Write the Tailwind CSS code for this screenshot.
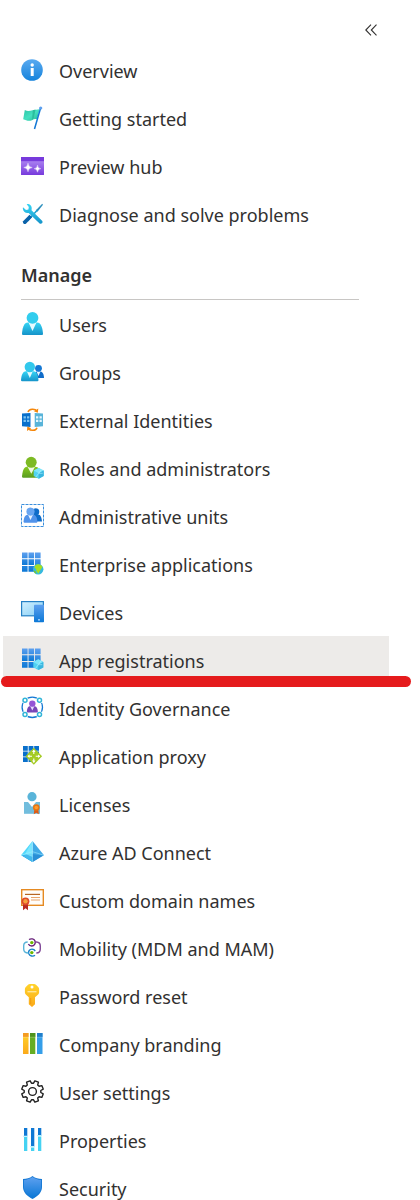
<!DOCTYPE html>
<html lang="en">
<head>
<meta charset="utf-8">
<meta name="viewport" content="width=device-width, initial-scale=1">
<title>Azure Active Directory menu</title>
<script src="https://cdn.jsdelivr.net/npm/@tailwindcss/browser@4"></script>
</head>
<body class="h-screen overflow-hidden bg-white font-['Noto_Sans','Open_Sans',sans-serif] text-lg text-[#323130]">
<svg class="absolute size-0" aria-hidden="true">
  <defs>
    <linearGradient id="info" x2="0" y2="1"><stop stop-color="#5aaaf0"/><stop offset="1" stop-color="#1583dc"/></linearGradient>
    <linearGradient id="blue" x2="0" y2="1"><stop stop-color="#5ea0ef"/><stop offset="1" stop-color="#0b78d6"/></linearGradient>
    <linearGradient id="cyan" x2="0" y2="1"><stop stop-color="#36d5f5"/><stop offset="1" stop-color="#1593c9"/></linearGradient>
    <linearGradient id="purple" x2="0" y2="1"><stop stop-color="#b794f6"/><stop offset="1" stop-color="#773adc"/></linearGradient>
    <linearGradient id="green" x2="0" y2="1"><stop stop-color="#86c81f"/><stop offset="1" stop-color="#599c20"/></linearGradient>
    <linearGradient id="gold" x2="0" y2="1"><stop stop-color="#ffd32b"/><stop offset="1" stop-color="#fba91a"/></linearGradient>
    <linearGradient id="teal" x2="1" y2="1"><stop stop-color="#2bc4a5"/><stop offset=".5" stop-color="#45e0c0"/><stop offset="1" stop-color="#25b896"/></linearGradient>
    <linearGradient id="screen" x2="1" y2="1"><stop stop-color="#d2f0ff"/><stop offset="1" stop-color="#83cdf5"/></linearGradient>
    <g id="cube"><path d="M0-5.4 5-2.700v5.400L0 5.400-5 2.700v-5.400z" fill="#50d3f2"/><path d="M0-5.400 5-2.700 0 0-5-2.700z" fill="#7de6fa"/><path d="M0 0 5-2.700v5.400L0 5.400z" fill="#39b5df"/><path d="M0 0-3 4M0 0 3-4M0 0h4" stroke="#b5f3ff" stroke-width=".6"/></g>
    <g id="tiles"><path d="M1 .5h5.600v5.800H1zM1 7.200h5.600V13H1z"/><path d="M7.500.5h5.600v5.800H7.500zM7.500 7.200h5.600V13H7.500z"/><path d="M14 .5h5.600v5.800H14zM14 7.200h5.600V13H14zM1 14h5.600v5.800H1zM7.500 14h5.600v5.800H7.500zM14 14h5.600v5.800H14z"/></g>
  </defs>
</svg>

<nav aria-label="Azure Active Directory" class="pl-[3px]">
  <div class="flex h-[46px] items-start justify-end pt-5 pr-[39px]">
    <button type="button" aria-label="Collapse menu" class="flex h-5 w-5 items-center justify-center">
      <svg class="h-3 w-3" viewBox="0 0 12 12" fill="none" stroke="#323130" stroke-width="1.1"><path d="M6 .7.8 6 6 11.300M11.500.7 6.300 6l5.200 5.300"/></svg>
    </button>
  </div>

  <ul class="mr-[31px] [&_a]:pt-0.5 [&_svg]:mb-0.5">
    <li><a href="#overview" class="flex h-12 items-center gap-[14px] pl-[18px]">
      <svg class="size-6 shrink-0" viewBox="0 0 24 24"><circle cx="11" cy="12" r="10.800" fill="url(#info)"/><circle cx="11.200" cy="7" r="1.700" fill="#fff"/><path d="M9.700 10h3v8h-3z" fill="#fff"/></svg>
      Overview</a></li>
    <li><a href="#start" class="flex h-12 items-center gap-[14px] pl-[18px]">
      <svg class="size-6 shrink-0" viewBox="0 0 24 24"><path d="M3.800 4c3 1.800 5.200.8 8 .2l6.700-.9-2.300 10c-2-.7-3.300-.3-5.200.9-3 1.200-6 .3-8.800-1z" fill="url(#teal)"/><path d="m11.800 4.200 2.700-.7-1.700 8.600-1.800 2z" fill="#2bbd9d"/><path d="m19.600 2-6.100 21" stroke="#1478d4" stroke-width="1.500"/><circle cx="19.700" cy="2" r="1.600" fill="#5ea0ef"/></svg>
      Getting started</a></li>
    <li><a href="#preview" class="flex h-12 items-center gap-[14px] pl-[18px]">
      <svg class="size-6 shrink-0" viewBox="0 0 24 24"><rect y="3" width="23" height="18" rx=".6" fill="url(#purple)"/><path d="M0 3h23v4.200H0z" fill="#773adc"/><path d="M7 9.200q.4 4 4.200 4.300-3.800.3-4.200 4.300-.4-4-4.200-4.300Q6.600 13.200 7 9.200zM16.500 11.200q.3 3.100 3.300 3.500-3 .4-3.300 3.500-.3-3.100-3.300-3.500 3-.4 3.300-3.500z" fill="#fff" stroke="#fff" stroke-width=".4"/></svg>
      Preview hub</a></li>
    <li><a href="#diagnose" class="flex h-12 items-center gap-[14px] pl-[18px]">
      <svg class="size-6 shrink-0" viewBox="0 0 24 24"><path d="m21.200 1.800.8.9-5.500 7-1.600-1.400z" fill="#2c8fbd"/><path d="m16.400 8-10 11" stroke="#1aa0cf" stroke-width="1.600"/><path d="m8.500 12.800 2.600 2.500-6.200 6.500c-1.500 1-3.600-.8-2.800-2.600z" fill="#0a62a9"/><path d="M5.700 2.200c2.500-.6 5.300 1.300 5 4.500l-.2 1.500L21.300 19c1 1.600-1 3.600-2.700 2.600L7.700 10.900C4.800 11.500 1.900 9.800 1.800 6.300l.2-1 3 2.800 2.400-.6.400-2.400z" fill="url(#cyan)"/></svg>
      Diagnose and solve problems</a></li>
  </ul>

  <h2 class="mr-[61px] ml-[18px] flex h-[62px] items-center border-b border-[#c8c6c4] pt-3 font-semibold">Manage</h2>

  <ul class="mr-[31px] [&_a]:pt-0.5 [&_svg]:mb-0.5">
    <li><a href="#users" class="flex h-12 items-center gap-[14px] pl-[18px]">
      <svg class="size-6 shrink-0" viewBox="0 0 24 24"><path d="M1 22c.3-5 1.400-11.500 6-11.500h9c4.500 0 5.700 6.500 6 11.500q0 1-1 1H2q-1 0-1-1z" fill="url(#cyan)"/><path d="M7.500 10.500h8L11.500 19z" fill="#e6fbff"/><circle cx="11.500" cy="5.900" r="5.900" fill="#32cdee"/></svg>
      Users</a></li>
    <li><a href="#groups" class="flex h-12 items-center gap-[14px] pl-[18px]">
      <svg class="size-6 shrink-0" viewBox="0 0 24 24"><path d="M13 18c0-4 1-6.500 3-6.500h3.500c2.500 0 3.500 4 3.500 6.500z" fill="#0f6cc9"/><path d="m15.500 11.500 2 4.500 2-4.500z" fill="#e6f6ff"/><circle cx="17.500" cy="8.300" r="3.400" fill="#1478d4"/><path d="M0 20.500C.2 16 1.500 11.300 5 11.300h7.500c3.500 0 4.700 4.700 5 9.200l-.8.800H.8z" fill="url(#cyan)"/><path d="M5.800 11.300h6L8.800 18z" fill="#e6fbff"/><circle cx="8.800" cy="7" r="5.200" fill="#32c8ec"/></svg>
      Groups</a></li>
    <li><a href="#external" class="flex h-12 items-center gap-[14px] pl-[18px]">
      <svg class="size-6 shrink-0" viewBox="0 0 24 24"><path d="M1 5.500 9.500 5v14L1 18.300z" fill="#0a70cb"/><path d="M13.700 5 22 5.500v12.800l-8.300.7z" fill="#59b4d9"/><path d="M2.500 8.300h2.400v2.200H2.500zm3.500 0h2.300v2.200H6zm-3.500 3.500h2.400V14H2.500zm3.500 0h2.300V14H6z" fill="#7dc4f2"/><path d="M15 8.300h2.300v2.200H15zm3.500 0h2.300v2.200h-2.300zM15 11.800h2.300V14H15zm3.500 0h2.300V14h-2.300z" fill="#e5f7ff"/><path d="M7 4c1-3.500 7.200-3.700 9-.7M16 19.700c-1 3.300-6.500 3.500-8.500.8" fill="none" stroke="#f5870b" stroke-width="1.500"/><path d="m17.300.5-.5 4.200-3.900-1.400zM6 23l.3-4.500 3.900 1.700z" fill="#f5870b"/></svg>
      External Identities</a></li>
    <li><a href="#roles" class="flex h-12 items-center gap-[14px] pl-[18px]">
      <svg class="size-6 shrink-0" viewBox="0 0 24 24"><path d="M1 21c.3-4.500 1.300-10.200 5-10.200h8.500c3 0 4.500 3 4.700 8.500l-2.200 2.500H1.800z" fill="url(#green)"/><path d="M6.500 10.800h7.500l-3.700 7z" fill="#f0f8e5"/><circle cx="10.200" cy="6.300" r="5.500" fill="#7dba23"/><use href="#cube" x="17.700" y="17.300"/></svg>
      Roles and administrators</a></li>
    <li><a href="#units" class="flex h-12 items-center gap-[14px] pl-[18px]">
      <svg class="size-6 shrink-0" viewBox="0 0 24 24"><rect x=".5" y=".5" width="22" height="22" fill="none" stroke="#3a8fdd" stroke-dasharray="3 1"/><path d="M10 17.500c1-5 2-7 4-7h3c2.700 0 3.700 3.500 4 7z" fill="#0f6cc9"/><circle cx="14.800" cy="7.800" r="3.500" fill="#0f6cc9"/><path d="M2.500 18c.2-3.500 1.200-7.300 4-7.300h6c2.700 0 3.700 3.800 4 7.300l-.8.800H3.300z" fill="#5193eb"/><path d="M7 10.700h5L9.500 16z" fill="#e8f3ff"/><circle cx="9.500" cy="7.600" r="4.100" fill="#67a5f1"/></svg>
      Administrative units</a></li>
    <li><a href="#enterprise" class="flex h-12 items-center gap-[14px] pl-[18px]">
      <svg class="size-6 shrink-0" viewBox="0 0 24 24"><use href="#tiles" fill="url(#blue)"/><circle cx="17.200" cy="17.200" r="5.200" fill="#36b9df"/><path d="M14.500 13c3-1.500 5.800-.2 7 2l-2.200 3.200-2 3.500-1.800-2.500-.7-2.500-1.500-1z" fill="#a4df24"/><path d="m12.500 18 2.300 1.500.5 2.500c-1.500-.6-2.700-2.300-2.800-4z" fill="#7ac82c"/></svg>
      Enterprise applications</a></li>
    <li><a href="#devices" class="flex h-12 items-center gap-[14px] pl-[18px]">
      <svg class="size-6 shrink-0" viewBox="0 0 24 24"><rect x=".6" y="1.600" width="21.800" height="14.200" fill="url(#screen)" stroke="#2580c5" stroke-width="1.200"/><rect x="13" y="4.700" width="10" height="17.500" rx=".8" fill="url(#blue)"/><path d="M17 19.300h2v1.200h-2z" fill="#b9dcff"/></svg>
      Devices</a></li>
    <li class="relative"><a href="#apps" aria-current="page" class="flex h-12 items-center gap-[14px] bg-[#edebe9] pl-[18px]">
      <svg class="size-6 shrink-0" viewBox="0 0 24 24"><use href="#tiles" fill="url(#blue)"/><use href="#cube" x="17.300" y="16.700"/></svg>
      App registrations</a>
      <span class="absolute top-10 -right-[22px] -left-[2px] h-[11px] rounded-full bg-[#e51b1c]"></span></li>
    <li><a href="#governance" class="flex h-12 items-center gap-[14px] pl-[18px]">
      <svg class="size-6 shrink-0" viewBox="0 0 24 24"><circle cx="11.300" cy="11.300" r="10.200" fill="none" stroke="#1478d4" stroke-width="1.300"/><g fill="#fff" stroke="#fff" stroke-width="2.600"><circle cx="4" cy="4.300" r="2"/><circle cx="18.500" cy="4.300" r="2"/><circle cx="4" cy="18.500" r="2"/><circle cx="18.500" cy="18.500" r="2"/></g><g fill="#fff" stroke="#32b5d8" stroke-width="1.500"><circle cx="4" cy="4.300" r="2"/><circle cx="18.500" cy="4.300" r="2"/><circle cx="4" cy="18.500" r="2"/><circle cx="18.500" cy="18.500" r="2"/></g><path d="M5.800 15.800c.2-3 1-5.500 3-5.500h5c2 0 2.900 2.500 3.100 5.500l-.7.700h-9.700z" fill="#7846b8"/><path d="M9.200 10.300h4.200l-2.100 4.300z" fill="#eadcff"/><circle cx="11.300" cy="7.600" r="3.200" fill="#9455d6"/></svg>
      Identity Governance</a></li>
    <li><a href="#proxy" class="flex h-12 items-center gap-[14px] pl-[18px]">
      <svg class="size-6 shrink-0" viewBox="0 0 24 24"><path d="M2 2h4.800v4.800H2zm5.600 0h4.800v4.800H7.600zm5.600 0H18v4.800h-4.800zM2 7.600h4.800v4.800H2zm5.600 0h4.800v4.800H7.600zm5.600 0H18v4.800h-4.800zM2 13.200h4.800V18H2zm5.600 0h4.800V18H7.600z" fill="#0a70cb"/><path d="m12.800 3.800 8.300 8.500-8.300 8.500-8.300-8.500z" fill="#a5cb24"/><path d="M12.800 6v4M12.800 14.500v4M7 12.300h4M14.700 12.300h4" stroke="#fff" stroke-width="1.100"/><path d="m11 8 1.800-2.200L14.600 8zM11 16.600l1.800 2.200 1.800-2.200zM8.600 10.500l-2.200 1.800 2.200 1.800zM17 10.500l2.200 1.800-2.200 1.800z" fill="#fff"/></svg>
      Application proxy</a></li>
    <li><a href="#licenses" class="flex h-12 items-center gap-[14px] pl-[18px]">
      <svg class="size-6 shrink-0" viewBox="0 0 24 24"><path d="M3 10h16v11.800H3z" fill="#72bddd"/><path d="M7 10h8l-4 5z" fill="#fff"/><circle cx="11" cy="4.700" r="4.600" fill="#59b4d9"/><path d="m13.300 17-.5 5.300 2.500-1.600 2.500 1.600-.5-5.300z" fill="#dc5b17"/><circle cx="15.300" cy="15.500" r="3.300" fill="#e87513"/><circle cx="15.300" cy="15.500" r="1.800" fill="#ff9d2c"/></svg>
      Licenses</a></li>
    <li><a href="#connect" class="flex h-12 items-center gap-[14px] pl-[18px]">
      <svg class="size-6 shrink-0" viewBox="0 0 24 24"><path d="M11.500 1 0 15.200 11.500 22z" fill="#50d8fb"/><path d="M11.500 1 23 15.200 11.500 22z" fill="#3fa9e6"/><path d="m11.500 14 10.500 1.500L11.500 22 1 15.500z" fill="#2a8fd6"/><path d="M11.500 14 1 15.500 11.500 22z" fill="#43b9ed"/><path d="M11.500 1 4.200 13.800 11.500 17z" fill="#8cecff" opacity=".7"/><path d="M11.500 1v21M.8 15l10.700-3.300L22.200 15" fill="none" stroke="#a8edff" stroke-width=".5"/></svg>
      Azure AD Connect</a></li>
    <li><a href="#domains" class="flex h-12 items-center gap-[14px] pl-[18px]">
      <svg class="size-6 shrink-0" viewBox="0 0 24 24"><rect x=".7" y="1.700" width="21.600" height="15.600" fill="#fffdfa" stroke="#e58a22" stroke-width="1.400"/><path d="M4 6.400h15" stroke="#b76623" stroke-width="1.200"/><path d="M10 9.500h9M10 12h9" stroke="#e9a56c" stroke-width="1.200"/><path d="M2 15h5v7.200l-2.500-2L2 22.200z" fill="#b92b22"/><circle cx="4.500" cy="13.300" r="3.900" fill="#dd4a2b"/><circle cx="4.500" cy="13.300" r="2.200" fill="#f5a13c"/></svg>
      Custom domain names</a></li>
    <li><a href="#mobility" class="flex h-12 items-center gap-[14px] pl-[18px]">
      <svg class="size-6 shrink-0" viewBox="0 0 24 24" fill="none" stroke-width="1.400"><path d="M8 3.500c2-1.200 5-.8 6 1.500.9 2.500-.7 5-3.300 5-1.500 0-2.700-.7-3.300-2" stroke="#68217a"/><path d="M14.300 6h1.200c2.300.2 3.800 1.700 3.800 4v3c0 2.300-1.300 4-4 4" stroke="#804998"/><path d="M14 19.300c-2 1.500-5.200.8-6.200-1.500-.8-2.500.8-4.700 3.200-4.700 1.500 0 2.600.6 3.200 2" stroke="#1680c9"/><path d="M7.500 17C4 17 2.700 15.300 2.700 13V9.800c0-2.300 1.500-3.800 4-3.800" stroke="#59b4d9"/><circle cx="10.800" cy="6.600" r="1.700" fill="#6bb700"/><circle cx="10.800" cy="16.600" r="1.700" fill="#6bb700"/></svg>
      Mobility (MDM and MAM)</a></li>
    <li><a href="#password" class="flex h-12 items-center gap-[14px] pl-[18px]">
      <svg class="size-6 shrink-0" viewBox="0 0 24 24"><path d="M9 0h4q1.200 0 2.200 1l2 2q.9.900.9 2v3.500q0 1.100-.9 2L14 13.200v7L11 23l-3.200-2.700v-7L4.800 10.500q-.9-.9-.9-2V5q0-1.100.9-2l2-2q.9-1 2.200-1z" fill="url(#gold)"/><circle cx="11" cy="2.900" r="1.500" fill="#fff"/><path d="M6.500 7.700h9" stroke="#ffe699" stroke-width="1.400"/><path d="M9.700 14v6" stroke="#f09b10" stroke-width="1"/></svg>
      Password reset</a></li>
    <li><a href="#branding" class="flex h-12 items-center gap-[14px] pl-[18px]">
      <svg class="size-6 shrink-0" viewBox="0 0 24 24"><path d="M2 1h5.500v21H2z" fill="url(#gold)"/><path d="M2 1h5.500v4H2z" fill="#f49b21"/><path d="M9 1h5.300v21H9z" fill="#65ad24"/><path d="M9 1h5.300v4H9z" fill="#4f921b"/><path d="M16 1h5.500v21H16z" fill="#359ee9"/><path d="M16 1h5.500v4H16z" fill="#207ecb"/><path d="M2 5.200h5.500M9 5.200h5.300M16 5.200h5.500" stroke="#fff" stroke-opacity=".35" stroke-width=".7"/></svg>
      Company branding</a></li>
    <li><a href="#usersettings" class="flex h-12 items-center gap-[14px] pl-[18px]">
      <svg class="size-6 shrink-0" viewBox="0 0 24 24"><g transform="translate(11.500 11.500)" fill="none" stroke="#222" stroke-width="1.400" stroke-linejoin="round"><path d="M10.700 2.400 9.300 5.900 6.600 5.200 5.200 6.600l.7 2.700-3.500 1.400L1 8.300h-2l-1.400 2.400-3.500-1.400.7-2.700-1.400-1.400-2.700.7-1.400-3.500L-8.300 1v-2l-2.400-1.400 1.400-3.500 2.700.7 1.400-1.400-.7-2.700 3.500-1.400L-1-8.300h2l1.400-2.400 3.500 1.400-.7 2.700 1.400 1.400 2.700-.7 1.400 3.500L8.300-1v2z"/><circle r="3.900"/></g></svg>
      User settings</a></li>
    <li><a href="#properties" class="flex h-12 items-center gap-[14px] pl-[18px]">
      <svg class="size-6 shrink-0" viewBox="0 0 24 24"><path d="M3 0h3.300v8H3zM10 0h3.300v18H10zM17 0h3.300v7H17z" fill="#0f78d4"/><path d="M3 9h3.300v14H3zM10 19.500h3.300V23H10zM17 8.500h3.300V23H17z" fill="#45d2f2"/><path d="M2.200 8.200h4.800M9.200 18.700H14M16.200 7.600H21" stroke="#a7ecff" stroke-width="1"/></svg>
      Properties</a></li>
    <li><a href="#security" class="flex h-12 items-center gap-[14px] pl-[18px]">
      <svg class="size-6 shrink-0" viewBox="0 0 24 24"><path d="M11.500 0c3 2.300 5.700 2.800 9.500 3v8c0 5.500-4.500 9.500-9.500 12C6.500 20.500 2 16.500 2 11V3c3.800-.2 6.500-.7 9.500-3z" fill="#1478d4"/><path d="M11.500 1c2.800 2 5.300 2.700 8.600 2.900V11c0 4.800-4 8.500-8.600 10.800C6.900 19.500 2.900 15.800 2.900 11V3.900C6.200 3.700 8.700 3 11.500 1z" fill="url(#blue)"/></svg>
      Security</a></li>
  </ul>
</nav>
</body>
</html>
